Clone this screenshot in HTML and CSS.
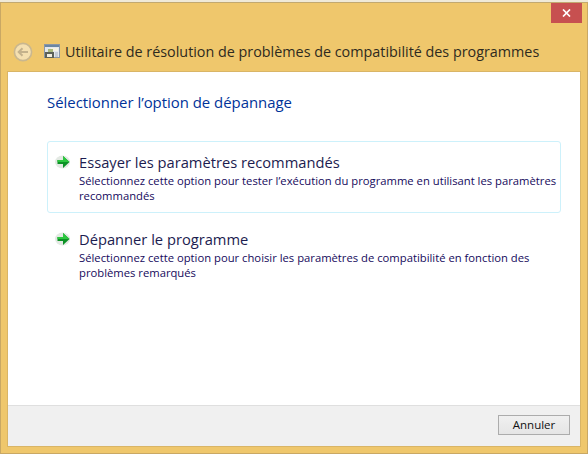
FILE: index.html
```html
<!DOCTYPE html>
<html lang="fr">
<head>
<meta charset="utf-8">
<title>Utilitaire de résolution de problèmes</title>
<link rel="stylesheet" href="styles.css">
</head>
<body>
<div class="window">
  <div class="topbar">
    <div class="close"><svg width="9" height="8" viewBox="0 0 9 8"><path d="M1 0.5 L8 7.5 M8 0.5 L1 7.5" stroke="#fff" stroke-width="1.7" fill="none"/></svg></div>
  </div>
  <div class="header">
    <div class="back"><svg width="20" height="20" viewBox="0 0 20 20"><circle cx="10" cy="10" r="8.6" fill="#f5e0b0" stroke="#c9b78f" stroke-width="1.6"/><path d="M15 10 H6 M9.5 6.3 L5.7 10 L9.5 13.7" stroke="#c4b28c" stroke-width="2" fill="none"/></svg></div>
    <div class="appicon"><svg width="16" height="16" viewBox="0 0 16 16"><rect x="0.5" y="0.5" width="15" height="13" fill="#e4e8ec" stroke="#8a97a6"/><rect x="1" y="1" width="14" height="2" fill="#6a86a3"/><rect x="7" y="4" width="7" height="3" fill="#f6f3e4"/><path d="M4 5 H9 V8 H4 Z" fill="#a9b97c"/><path d="M1 8 H10 V14 H1 Z" fill="#5b6159"/><rect x="3" y="10" width="5" height="3" fill="#f2efe0"/><rect x="11" y="8" width="3" height="5" fill="#c5ccd4"/></svg></div>
    <div class="title">Utilitaire de résolution de problèmes de compatibilité des programmes</div>
  </div>
  <div class="panel">
    <main class="content">
      <h1 class="heading">Sélectionner l’option de dépannage</h1>
      <div class="options">
        <div class="option option-hot">
          <svg class="arrow" width="16" height="14" viewBox="0 0 16 14"><ellipse cx="7.5" cy="7" rx="7.5" ry="6.5" fill="#e3e9e3"/><path d="M2.5 5 H8 V1 L14.5 7 L8 13 V9 H2.5 Z" fill="#0c9226"/><path d="M2.5 5 H8 V1 L14.5 7 H2.5 Z" fill="#2cc63f"/></svg>
          <div class="option-text">
            <div class="option-title">Essayer les paramètres recommandés</div>
            <div class="option-desc">Sélectionnez cette option pour tester l’exécution du programme en utilisant les paramètres recommandés</div>
          </div>
        </div>
        <div class="option">
          <svg class="arrow" width="16" height="14" viewBox="0 0 16 14"><ellipse cx="7.5" cy="7" rx="7.5" ry="6.5" fill="#e3e9e3"/><path d="M2.5 5 H8 V1 L14.5 7 L8 13 V9 H2.5 Z" fill="#0c9226"/><path d="M2.5 5 H8 V1 L14.5 7 H2.5 Z" fill="#2cc63f"/></svg>
          <div class="option-text">
            <div class="option-title">Dépanner le programme</div>
            <div class="option-desc">Sélectionnez cette option pour choisir les paramètres de compatibilité en fonction des problèmes remarqués</div>
          </div>
        </div>
      </div>
    </main>
    <footer class="footer"><div class="button">Annuler</div></footer>
  </div>
</div>
</body>
</html>
```
FILE: styles.css
```css
html, body { margin: 0; padding: 0; }
body { width: 588px; height: 454px; overflow: hidden; background: #efc76c; font-family: "Open Sans", "Noto Sans", sans-serif; }
.window { box-sizing: border-box; width: 588px; height: 454px; display: flex; flex-direction: column; background: #efc76c; border-top: 2px solid #f0ead8; box-shadow: inset 1px 0 0 #c9a864, inset -1px 0 0 #c9a864, inset 0 -1px 0 #c9a864; padding: 0 8px 8px; }
.topbar { height: 21px; flex: none; display: flex; justify-content: flex-end; border-top: 1px solid #c2a970; margin: 0 -7px; padding-right: 5px; }
.close { width: 31px; height: 20px; background: #c75050; display: flex; align-items: center; justify-content: center; }
.close svg { display: block; }
.header { height: 48px; flex: none; display: flex; align-items: center; padding-top: 7px; box-sizing: border-box; }
.back { width: 20px; height: 20px; margin-left: 5px; flex: none; }
.back svg, .appicon svg { display: block; }
.appicon { width: 16px; height: 16px; margin-left: 11px; flex: none; }
.title { margin-left: 5px; font-size: 14.35px; color: #2e2a20; white-space: nowrap; }
.panel { flex: 1; display: flex; flex-direction: column; background: #fff; box-shadow: 0 0 0 1px #d9b566; }
.content { flex: 1; padding: 20px 19px 0 39px; }
.heading { margin: 0; font-size: 14.9px; font-weight: 400; line-height: 20px; color: #003399; }
.options { margin-top: 29px; display: flex; flex-direction: column; gap: 5px; }
.option { display: flex; box-sizing: border-box; height: 72px; padding: 10px 0 0 7px; border: 1px solid transparent; border-radius: 3px; }
.option-hot { border-color: #cdf1fb; }
.arrow { flex: none; margin-top: 3px; }
.option-text { margin-left: 8px; }
.option-title { font-size: 14.7px; line-height: 20px; color: #1c1c50; }
.option-desc { font-size: 11.25px; line-height: 15px; color: #150a5c; margin-top: 1px; }
.footer { height: 41px; flex: none; box-sizing: border-box; background: #f0f0f0; border-top: 1px solid #dfdfdf; display: flex; justify-content: flex-end; align-items: flex-start; padding: 9px 10px 0 0; }
.button { width: 72px; height: 20px; box-sizing: border-box; border: 1px solid #acacac; background: linear-gradient(#f0f0f0, #e5e5e5); font-size: 11.5px; line-height: 18px; text-align: center; color: #111; }
```
